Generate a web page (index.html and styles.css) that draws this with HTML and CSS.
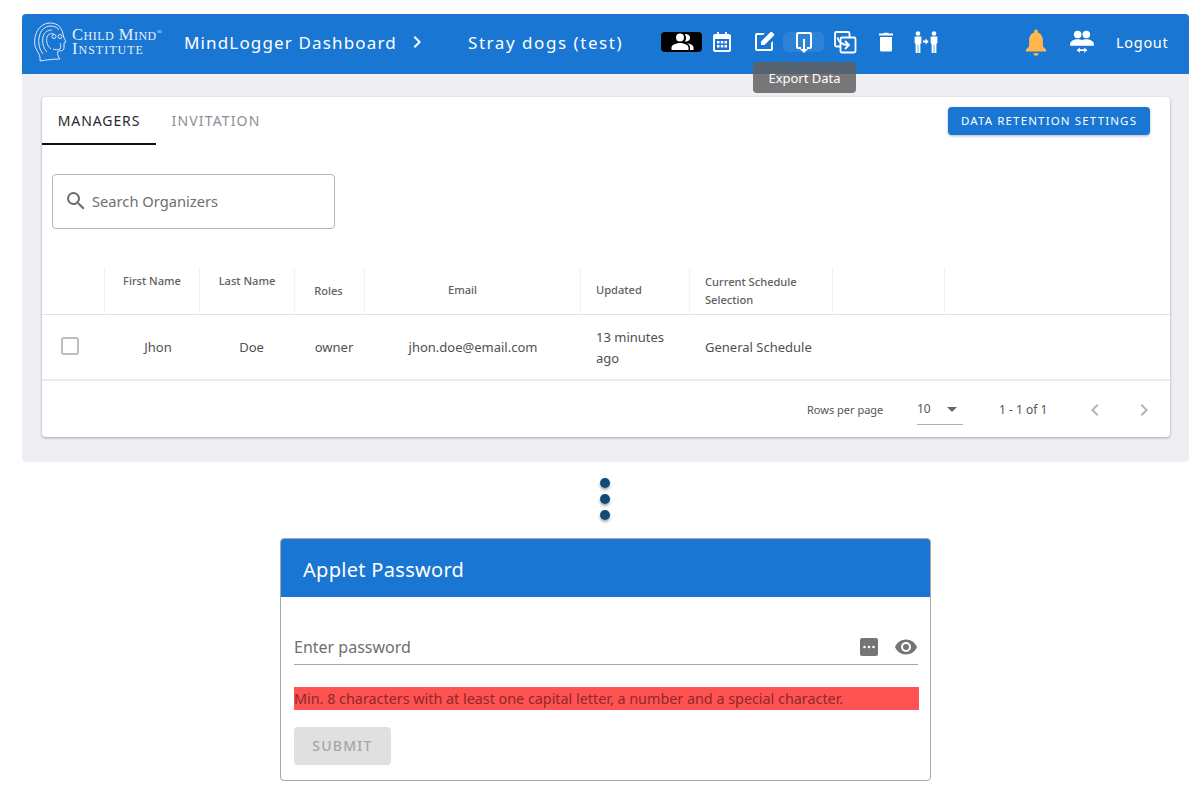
FILE: index.html
```html
<!DOCTYPE html>
<html lang="en">
<head>
<meta charset="utf-8">
<title>MindLogger Dashboard</title>
<link rel="stylesheet" href="styles.css">
</head>
<body>
<section class="dashboard">
  <header class="topbar">
    <div class="logo">
      <svg class="logo-head" viewBox="0 0 34 42" fill="none" stroke="#dfeaf6" stroke-width="1">
        <path d="M7 40C8 34 4 31 2 25-0 14 6 2 17 2c8 0 12 5 13 11l1 4 2 4-2 1v5c0 3-4 3-6 3-1 3 0 6 2 8-7 0-14 1-20 2z"/>
        <path d="M10 33C7 29 5 24 6 17 7 9 12 5 18 5c4 0 7 2 8 4"/>
        <path d="M14 31C10 27 9 21 10 16c1-5 5-7 9-7"/>
        <path d="M18 28c-4-3-5-8-4-12 1-3 4-4 7-3"/>
        <path d="M20 28c2 1 5 1 7 0 1-2 1-4 0-6"/>
        <circle cx="21" cy="15.500" r="2"/><circle cx="27" cy="15.500" r="2"/>
      </svg>
      <div class="logo-text"><span class="logo-l1">Child Mind<sup>®</sup></span><span class="logo-l2">Institute</span></div>
    </div>
    <span class="crumb">MindLogger Dashboard</span>
    <svg class="chev" viewBox="0 0 24 24"><path d="M10 6 8.600 7.400 13.200 12l-4.600 4.600L10 18l6-6z"/></svg>
    <span class="applet">Stray dogs (test)</span>
    <nav class="tools">
      <span class="tool tool-active"><svg viewBox="0 0 24 24"><path d="M16.500 11.500a3.700 3.700 0 1 0-1.800-7 5.500 5.500 0 0 1 0 7 3.700 3.700 0 0 0 1.800 0zM10 11.500a4 4 0 1 0 0-8 4 4 0 0 0 0 8zM10 13c-3 0-8.500 1.500-8.500 4.500V20h17v-2.500C18.500 14.500 13 13 10 13zm7 .2c1.700.9 3 2.300 3 4.300V20h3.500v-2.500c0-2.800-4-4-6.500-4.300z"/></svg></span>
      <span class="tool tool-cal"><svg viewBox="0 0 24 24"><path fill-rule="evenodd" d="M7 2h2v2h6V2h2v2h2a2 2 0 0 1 2 2v14a2 2 0 0 1-2 2H5a2 2 0 0 1-2-2V6a2 2 0 0 1 2-2h2zM5 9v11h14V9zm2 2h2.500v2.500H7zm3.800 0h2.500v2.500h-2.500zm3.700 0H17v2.500h-2.500zM7 15h2.500v2.500H7zm3.800 0h2.500v2.500h-2.500zm3.700 0H17v2.500h-2.500z"/></svg></span>
      <span class="tool tool-edit"><svg viewBox="0 0 24 24"><path d="M5 21a2 2 0 0 1-2-2V5a2 2 0 0 1 2-2h8l-2 2H5v14h14v-6l2-2v8a2 2 0 0 1-2 2zm4-6v-3.500L18.500 2a1 1 0 0 1 1.400 0L22 4.100a1 1 0 0 1 0 1.400L12.500 15z"/></svg></span>
      <span class="tool tool-hover"><svg viewBox="0 0 24 24"><path d="M6 2h12a2 2 0 0 1 2 2v13a2 2 0 0 1-2 2h-3v-2h3V4H6v13h3v2H6a2 2 0 0 1-2-2V4a2 2 0 0 1 2-2zm5 7h2v10h3l-4 4-4-4h3z"/></svg></span>
      <span class="tool tool-dup"><svg class="line-icon" viewBox="0 0 24 24"><path d="M7 16.500H3.500A1.500 1.500 0 0 1 2 15V3.500A1.500 1.500 0 0 1 3.500 2H15a1.500 1.500 0 0 1 1.500 1.500V7"/><rect x="7.500" y="7.500" width="15" height="15" rx="1.500"/><path d="M4.500 7.500c1 5 5 7.500 11 7.500M12 11l4 4-4 4"/></svg></span>
      <span class="tool tool-trash"><svg viewBox="0 0 24 24"><path d="M6 20a1.500 1.500 0 0 0 1.500 1.500h9A1.500 1.500 0 0 0 18 20V7H6zM19 3.500h-4l-1-.7h-4l-1 .7H5v2h14z"/></svg></span>
      <span class="tool tool-transfer"><svg viewBox="0 0 24 22"><circle cx="4" cy="2.500" r="2.300"/><circle cx="20" cy="2.500" r="2.300"/><path d="M.6 5.500h6.800v6.500l-1 1V22H4.300v-8h-.6v8H1.600v-9l-1-1zm16 0h6.800v6.500l-1 1V22h-2.100v-8h-.6v8h-2.100v-9l-1-1zM9 9.500h2.500V7.500l3.200 3-3.200 3v-2H9z"/></svg></span>
    </nav>
    <svg class="bell" viewBox="0 0 24 24"><path d="M12 23a2.200 2.200 0 0 0 2.200-2h-4.400a2.200 2.200 0 0 0 2.200 2zm8-5-2.500-2.500V10.500c0-3-1.600-5.500-4-6.100V3.500a1.500 1.500 0 0 0-3 0v.9c-2.400.6-4 3.100-4 6.100v5L4 18v1.500h16z"/></svg>
    <svg class="people" viewBox="0 0 24 24"><circle cx="8" cy="5" r="3.500"/><circle cx="16" cy="5" r="3.500"/><path d="M1 14c0-3 4-4.500 7-4.500 1.500 0 3 .3 4 .9 1-.6 2.500-.9 4-.9 3 0 7 1.500 7 4.500v1.500H1zM7 19.500 10 17v1.700h4V17l3 2.500-3 2.500v-1.700h-4V22z"/></svg>
    <span class="logout">Logout</span>
  </header>

  <div class="content">
    <div class="tooltip">Export Data</div>
    <div class="card">
      <div class="tabbar">
        <div class="tab tab-on">MANAGERS</div>
        <div class="tab">INVITATION</div>
        <button class="retention">DATA RETENTION SETTINGS</button>
      </div>
      <div class="search">
        <svg viewBox="0 0 24 24"><path d="M15.500 14h-.79l-.28-.27A6.470 6.470 0 0 0 16 9.500 6.500 6.500 0 1 0 9.500 16c1.610 0 3.090-.59 4.230-1.570l.27.28v.79l5 4.990L20.490 19l-4.990-5zm-6 0C7.010 14 5 11.990 5 9.500S7.010 5 9.500 5 14 7.010 14 9.500 11.990 14 9.500 14z"/></svg>
        <span>Search Organizers</span>
      </div>
      <table class="grid">
        <colgroup>
          <col class="c1"><col class="c2"><col class="c3"><col class="c4"><col class="c5"><col class="c6"><col class="c7"><col class="c8"><col>
        </colgroup>
        <thead>
          <tr>
            <th></th>
            <th class="up center">First Name</th>
            <th class="up center">Last Name</th>
            <th class="center low role-head">Roles</th>
            <th class="center email-head">Email</th>
            <th>Updated</th>
            <th class="low">Current Schedule Selection</th>
            <th></th>
            <th class="last"></th>
          </tr>
        </thead>
        <tbody>
          <tr>
            <td class="check-cell"><span class="check"></span></td>
            <td class="center cell-first">Jhon</td>
            <td class="center cell-last">Doe</td>
            <td class="center cell-role">owner</td>
            <td class="center cell-email">jhon.doe@email.com</td>
            <td class="two">13 minutes ago</td>
            <td>General Schedule</td>
            <td></td>
            <td></td>
          </tr>
        </tbody>
      </table>
      <div class="pager">
        <span class="rows-label">Rows per page</span>
        <span class="rows-select">10<i class="caret"></i></span>
        <span class="range">1 - 1 of 1</span>
        <svg class="page-arrow" viewBox="0 0 24 24"><path d="M15.400 7.400 14 6l-6 6 6 6 1.400-1.400L10.800 12z"/></svg>
        <svg class="page-arrow" viewBox="0 0 24 24"><path d="M10 6 8.600 7.400 13.200 12l-4.600 4.600L10 18l6-6z"/></svg>
      </div>
    </div>
  </div>
</section>

<div class="dots"><i></i><i></i><i></i></div>

<section class="dialog">
  <h2 class="dialog-title">Applet Password</h2>
  <div class="dialog-body">
    <div class="field">
      <span class="placeholder">Enter password</span>
      <svg class="key" viewBox="0 0 20 20"><rect x="1" y="1" width="18" height="18" rx="2"/><circle cx="5.500" cy="10" r="1.300" fill="#fff"/><circle cx="10" cy="10" r="1.300" fill="#fff"/><circle cx="14.500" cy="10" r="1.300" fill="#fff"/></svg>
      <svg class="eye" viewBox="0 0 24 24"><path d="M12 4.500C7 4.500 2.700 7.600 1 12c1.700 4.400 6 7.500 11 7.500s9.300-3.100 11-7.500c-1.700-4.400-6-7.500-11-7.500zM12 17a5 5 0 1 1 0-10 5 5 0 0 1 0 10zm0-8a3 3 0 1 0 0 6 3 3 0 0 0 0-6z"/></svg>
    </div>
    <p class="hint">Min. 8 characters with at least one capital letter, a number and a special character.</p>
    <button class="submit" disabled>SUBMIT</button>
  </div>
</section>
</body>
</html>
```
FILE: styles.css
```css
* { box-sizing: border-box; }
html, body { margin: 0; padding: 0; }
body {
  width: 1200px;
  height: 800px;
  overflow: hidden;
  background: #fff;
  padding-top: 14px;
  font-family: "Noto Sans", "Open Sans", sans-serif;
  color: #3c3c3c;
}
.dashboard {
  width: 1167px;
  height: 448px;
  margin-left: 22px;
  background: #eeeef3;
  border-radius: 4px;
}
.topbar {
  height: 60px;
  background: #1976d2;
  border-radius: 4px 4px 0 0;
  display: flex;
  align-items: center;
  color: #fff;
  padding: 0 0 4px 11px;
}
.logo { display: flex; align-items: center; width: 151px; }
.logo-head { width: 34px; height: 42px; flex: none; }
.logo-text {
  display: flex;
  flex-direction: column;
  font-family: "Liberation Serif", serif;
  font-variant: small-caps;
  line-height: 14px;
  margin: 0 0 0 5px;
  color: #e6f0fa;
  white-space: nowrap;
}
.logo-l1 { font-size: 16.500px; letter-spacing: .5px; }
.logo-l2 { font-size: 16.500px; letter-spacing: 1px; }
.logo-text sup { font-size: 7px; line-height: 0; }
.crumb, .applet, .logout { white-space: nowrap; }
.crumb { width: 224px; font-size: 17px; letter-spacing: 1.150px; }
.chev { width: 24px; height: 24px; fill: #fff; margin-left: -3px; }
.applet { margin-left: 39px; width: 193px; font-size: 17px; letter-spacing: 1.550px; }
.tools { display: flex; align-items: center; }
.tool { display: flex; align-items: center; justify-content: center; height: 20px; }
.tool svg { width: 24px; height: 24px; fill: #fff; }
.tool svg.line-icon { fill: none; stroke: #fff; stroke-width: 1.800; }
.tool-active { width: 41px; background: #000; border-radius: 4px; }
.tool-cal { margin-left: 8px; }
.tool-edit { margin-left: 18px; }
.tool-hover { width: 41px; margin-left: 7px; background: rgba(255,255,255,.09); border-radius: 5px; }
.tool-dup { margin-left: 9px; }
.tool-trash { margin-left: 17px; }
.tool-transfer { margin-left: 16px; }
.tool-transfer svg { width: 24px; height: 22px; }
.bell { width: 30px; height: 30px; fill: #ffb74d; margin-left: 83px; }
.people { width: 26px; height: 26px; fill: #fff; margin-left: 18px; }
.logout { font-size: 14.500px; letter-spacing: .7px; margin-left: 21px; }

.content { position: relative; padding: 23px 19px 0 20px; }
.tooltip {
  position: absolute;
  left: 731px;
  top: -12px;
  width: 103px;
  height: 31px;
  border-radius: 4px;
  background: rgba(97,97,97,.85);
  color: #fff;
  font-size: 13px;
  line-height: 32px;
  text-align: center;
  z-index: 2;
}
.card {
  height: 340px;
  background: #fff;
  border-radius: 4px;
  box-shadow: 0 1px 3px rgba(0,0,0,.3);
}
.tabbar { display: flex; align-items: flex-start; height: 48px; }
.tab {
  width: 114px;
  height: 48px;
  line-height: 48px;
  font-size: 14px;
  letter-spacing: 1.150px;
  text-align: center;
  color: #8c8f94;
}
.tab-on { color: #28282e; border-bottom: 2px solid #111; letter-spacing: .9px; }
.tab + .tab { margin-left: 3px; }
.retention {
  margin: 10px 20px 0 auto;
  width: 202px;
  height: 28px;
  padding: 0 0 2px;
  border: 0;
  border-radius: 4px;
  background: #1976d2;
  color: #fff;
  font: 400 11.500px "Noto Sans", sans-serif;
  letter-spacing: 1.150px;
  box-shadow: 0 1px 3px rgba(0,0,0,.3);
}
.search {
  margin: 29px 0 0 10px;
  width: 283px;
  height: 55px;
  border: 1px solid #b5b5b5;
  border-radius: 4px;
  display: flex;
  align-items: center;
  padding: 0 0 2px 11px;
  font-size: 14.700px;
  color: #6f6f6f;
}
.search svg { width: 24px; height: 24px; fill: #6b6b6b; margin-right: 4px; }
.grid {
  margin-top: 38px;
  width: 100%;
  table-layout: fixed;
  border-collapse: separate;
  border-spacing: 0;
}
.c1 { width: 63px; } .c2 { width: 95px; } .c3 { width: 95px; } .c4 { width: 70px; }
.c5 { width: 216px; } .c6 { width: 109px; } .c7 { width: 143px; } .c8 { width: 112px; }
.grid th {
  height: 48px;
  padding: 0 16px 2px 15px;
  font-size: 11.100px;
  line-height: 18px;
  font-weight: 500;
  color: #606060;
  text-align: left;
  border-right: 1px solid #f2f2f2;
  border-bottom: 1px solid #e2e2e2;
  vertical-align: middle;
}
.grid th.last { border-right: 0; }
.grid th.up { vertical-align: top; padding: 5px 4px 0; }
.grid th.center { text-align: center; }
.grid th.low { padding-top: 2px; padding-bottom: 2px; }
.grid th.role-head { padding-left: 16px; padding-right: 18px; }
.grid th.email-head { padding-left: 16px; padding-right: 36px; }
.grid td {
  height: 66px;
  padding: 0 16px 0 15px;
  font-size: 13px;
  line-height: 21px;
  color: #505050;
  border-bottom: 2px solid #eaeaea;
}
.grid td.two { padding-top: 2px; }
.grid td.check-cell { padding: 2px 0 0 16px; }
.grid td.center { text-align: center; padding: 0 4px; }
.grid td.cell-first { padding-left: 15px; }
.grid td.cell-last { padding-left: 12px; }
.grid td.cell-role { padding-left: 12px; }
.check {
  display: block;
  width: 18px;
  height: 18px;
  margin: 0 0 4px 3px;
  border: 2px solid #bdbdbd;
  border-radius: 3px;
}
.pager {
  display: flex;
  align-items: center;
  height: 57px;
  padding-left: 765px;
  font-size: 11px;
  color: #555;
  overflow: hidden;
}
.pager > * { flex: none; }
.rows-label { width: 110px; }
.rows-select {
  width: 46px;
  height: 30px;
  border-bottom: 1px solid #b0b0b0;
  font-size: 12px;
  line-height: 30px;
  display: flex;
  justify-content: space-between;
  align-items: center;
  padding-right: 6px;
}
.caret {
  width: 0;
  height: 0;
  border: 5px solid transparent;
  border-top-color: #666;
  border-bottom: 0;
}
.range { margin-left: 36px; width: 84px; font-size: 12px; }
.page-arrow { width: 24px; height: 24px; fill: #b3b3b3; margin-right: 25px; }

.dots {
  display: flex;
  flex-direction: column;
  align-items: center;
  gap: 6px;
  margin: 16px 0 0 10px;
  height: 60px;
}
.dots i {
  width: 10px;
  height: 10px;
  border-radius: 50%;
  background: #134a75;
  box-shadow: 0 2px 3px rgba(0,0,0,.35);
}
.dialog {
  width: 651px;
  height: 243px;
  margin-left: 280px;
  border: 1px solid #a8a8a8;
  border-radius: 4px;
  overflow: hidden;
}
.dialog-title {
  margin: 0;
  height: 58px;
  padding-left: 22px;
  background: #1976d2;
  color: #fff;
  font-size: 20px;
  font-weight: 400;
  line-height: 61px;
  letter-spacing: .3px;
}
.dialog-body { padding: 32px 12px 0 13px; }
.field {
  display: flex;
  align-items: center;
  height: 36px;
  border-bottom: 1px solid #a8a8a8;
  font-size: 16px;
  color: #6f6f6f;
}
.placeholder { flex: 1; padding-top: 1px; }
.key { width: 20px; height: 20px; fill: #757575; margin-right: 15px; }
.eye { width: 24px; height: 24px; fill: #757575; }
.hint {
  margin: 22px -1px 0 0;
  height: 23px;
  background: #ff5252;
  color: #8c2a2a;
  font-size: 14.350px;
  line-height: 23px;
}
.submit {
  display: block;
  margin-top: 17px;
  width: 97px;
  height: 38px;
  padding: 0 0 2px;
  border: 0;
  border-radius: 4px;
  background: #e0e0e0;
  color: #a6a6a6;
  font: 500 14px "Noto Sans", sans-serif;
  letter-spacing: 1.250px;
}
```
